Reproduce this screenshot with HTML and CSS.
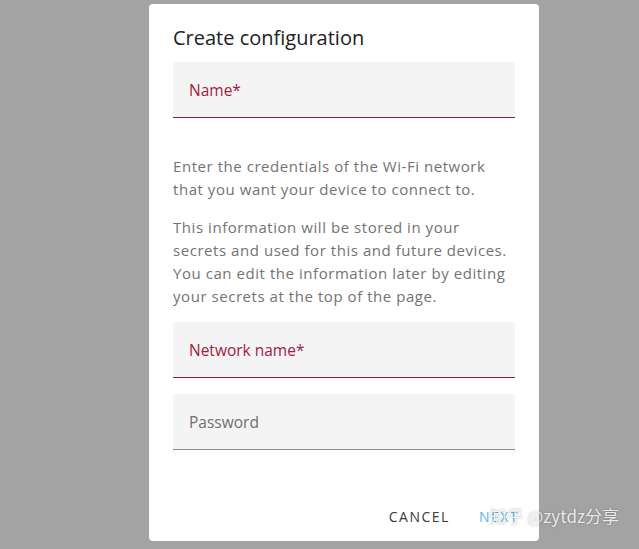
FILE: index.html
```html
<!DOCTYPE html>
<html lang="en">
<head>
  <meta charset="UTF-8">
  <meta name="viewport" content="width=device-width, initial-scale=1.0">
  <title>Create configuration</title>
  <link rel="stylesheet" href="styles.css">
</head>
<body>

  <div class="dialog">
    <h2>Create configuration</h2>
    <form id="configForm">
      <div class="field required">
        <label for="name">Name*</label>
        <input type="text" id="name" name="name" required>
      </div>
      <p class="info">Enter the credentials of the Wi-Fi network that you want your device to connect to.</p>
      <p class="info">This information will be stored in your secrets and used for this and future devices. You can edit the information later by editing your secrets at the top of the page.</p>
      <div class="field required">
        <label for="ssid">Network name*</label>
        <input type="text" id="ssid" name="ssid" required>
      </div>
      <div class="field">
        <label for="password">Password</label>
        <input type="password" id="password" name="password">
      </div>
      <div class="actions">
        <button type="button" class="btn">Cancel</button>
        <button type="submit" class="btn primary">Next</button>
        <span class="watermark">知乎 @zytdz分享</span>
      </div>
    </form>
  </div>

</body>
</html>
```

FILE: styles.css
```css
body {
  font-family: "Open Sans", Arial, sans-serif;
  margin: 0;
  padding: 0;
  background-color: #a3a3a3;
  height: 549px;
  overflow: hidden;
}
.dialog {
  width: 390px;
  height: 537px;
  box-sizing: border-box;
  margin: 4px 0 0 149px;
  background: white;
  padding: 22px 24px 0;
  border-radius: 4px;
  display: flex;
  flex-direction: column;
}
h2 {
  margin: 0 0 12px;
  font-size: 20px;
  font-weight: 400;
  color: #212121;
  line-height: 24px;
}
form {
  display: flex;
  flex-direction: column;
  flex: 1;
}
.field {
  position: relative;
  height: 55px;
  background: #f4f4f4;
  border-bottom: 1px solid #8a8a8a;
  border-radius: 4px 4px 0 0;
  margin-bottom: 16px;
}
.field.required {
  border-bottom-color: #8c1c38;
}
.field label {
  position: absolute;
  left: 16px;
  top: 17px;
  font-size: 15.5px;
  color: #6f6f6f;
}
.field.required label {
  color: #a2203f;
}
.field input {
  width: 100%;
  height: 100%;
  box-sizing: border-box;
  border: none;
  background: transparent;
  outline: none;
}
.info {
  margin: 21px 0 0;
  font-size: 15px;
  letter-spacing: 0.55px;
  line-height: 22.7px;
  color: #737373;
}
.info + .info {
  margin-top: 16px;
}
.info:last-of-type {
  margin-bottom: 15px;
}
.actions {
  margin-top: auto;
  height: 50px;
  display: flex;
  justify-content: flex-end;
  align-items: center;
  gap: 29px;
  position: relative;
}
.btn {
  font-family: inherit;
  background: none;
  border: none;
  padding: 0;
  font-size: 14px;
  letter-spacing: 1.5px;
  text-transform: uppercase;
  color: #3a3a3a;
  cursor: pointer;
}
.btn.primary {
  color: #4fb7e8;
  margin-right: -4px;
}
.watermark {
  position: absolute;
  right: -104px;
  top: 12px;
  font-family: "Noto Sans CJK SC", sans-serif;
  font-size: 17px;
  color: rgba(255, 255, 255, 0.85);
  text-shadow: 0 0 2px rgba(0, 0, 0, 0.35);
  white-space: nowrap;
}
```
